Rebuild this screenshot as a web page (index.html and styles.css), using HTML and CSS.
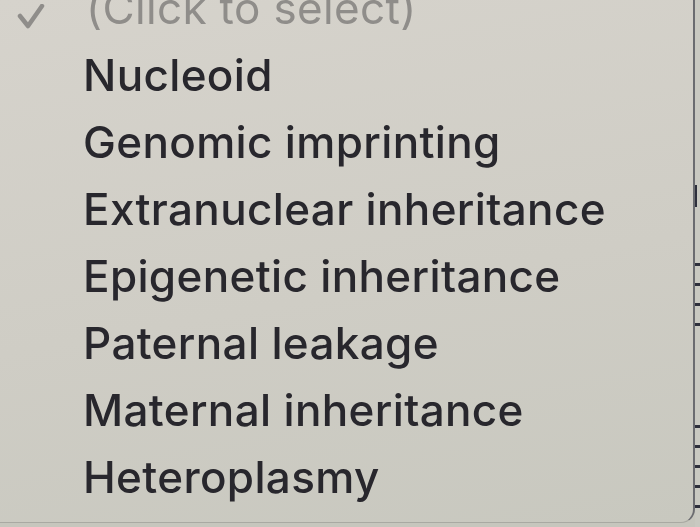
FILE: index.html
```html
<!DOCTYPE html>
<html lang="en">
<head>
  <meta charset="UTF-8">
  <meta name="viewport" content="width=device-width, initial-scale=1.0">
  <title>Select</title>
  <link rel="stylesheet" href="styles.css">
</head>
<body>
  <div class="screen">
    <ul class="menu">
      <li class="option placeholder">
        <span class="check">
          <svg width="30" height="30" viewBox="0 0 30 30"><polyline points="4,12 12,22 26,2" fill="none" stroke="currentColor" stroke-width="4.5" stroke-linecap="round" stroke-linejoin="round"/></svg>
        </span>
        <span class="label">(Click to select)</span>
      </li>
      <li class="option"><span class="check"></span><span class="label">Nucleoid</span></li>
      <li class="option"><span class="check"></span><span class="label">Genomic imprinting</span></li>
      <li class="option"><span class="check"></span><span class="label">Extranuclear inheritance</span></li>
      <li class="option"><span class="check"></span><span class="label">Epigenetic inheritance</span></li>
      <li class="option"><span class="check"></span><span class="label">Paternal leakage</span></li>
      <li class="option"><span class="check"></span><span class="label">Maternal inheritance</span></li>
      <li class="option"><span class="check"></span><span class="label">Heteroplasmy</span></li>
    </ul>

    <!-- window behind the menu, only its edge shows -->
    <div class="edge">
      <span class="tick long" style="top: 185px"></span>
      <span class="tick" style="top: 263px"></span>
      <span class="tick" style="top: 283px"></span>
      <span class="tick" style="top: 303px"></span>
      <span class="tick" style="top: 323px"></span>
      <span class="tick" style="top: 425px"></span>
      <span class="tick" style="top: 445px"></span>
      <span class="tick" style="top: 465px"></span>
      <span class="tick" style="top: 485px"></span>
      <span class="tick" style="top: 505px"></span>
    </div>
  </div>
</body>
</html>
```

FILE: styles.css
```css
* {
  margin: 0;
  padding: 0;
  box-sizing: border-box;
}
html, body {
  width: 700px;
  height: 527px;
  overflow: hidden;
}
body {
  background: #c6c6bd;
  font-family: 'Inter', 'Liberation Sans', sans-serif;
}
.screen {
  display: flex;
  height: 100%;
}
.menu {
  list-style: none;
  width: 695px;
  height: 523px;
  flex-shrink: 0;
  background: linear-gradient(170deg, #d6d3cc 0%, #cfcdc5 55%, #c8c8bf 100%);
  border-right: 2px solid #6b6c70;
  border-bottom: 1px solid #a9a9a2;
  border-bottom-right-radius: 14px;
  overflow: hidden;
}
.option {
  display: flex;
  align-items: center;
  height: 67px;
  font-size: 44px;
  font-weight: 500;
  letter-spacing: 0.35px;
  line-height: 67px;
  color: #28272d;
  filter: blur(0.6px);
}
.option:first-child {
  margin-top: -25px;
}
.check {
  width: 83px;
  flex-shrink: 0;
  display: flex;
  padding-left: 16px;
  color: #8f8d8a;
}
.check svg {
  display: block;
  margin-top: 20px;
}
.placeholder .label {
  color: #8f8d8a;
  font-weight: 400;
  padding-left: 3px;
}
.edge {
  position: relative;
  flex: 1;
  background: #c9c9c1;
}
.tick {
  position: absolute;
  left: 0;
  width: 5px;
  height: 3px;
  background: #2e303c;
  filter: blur(0.5px);
}
.tick.long {
  width: 2px;
  height: 22px;
}
```
